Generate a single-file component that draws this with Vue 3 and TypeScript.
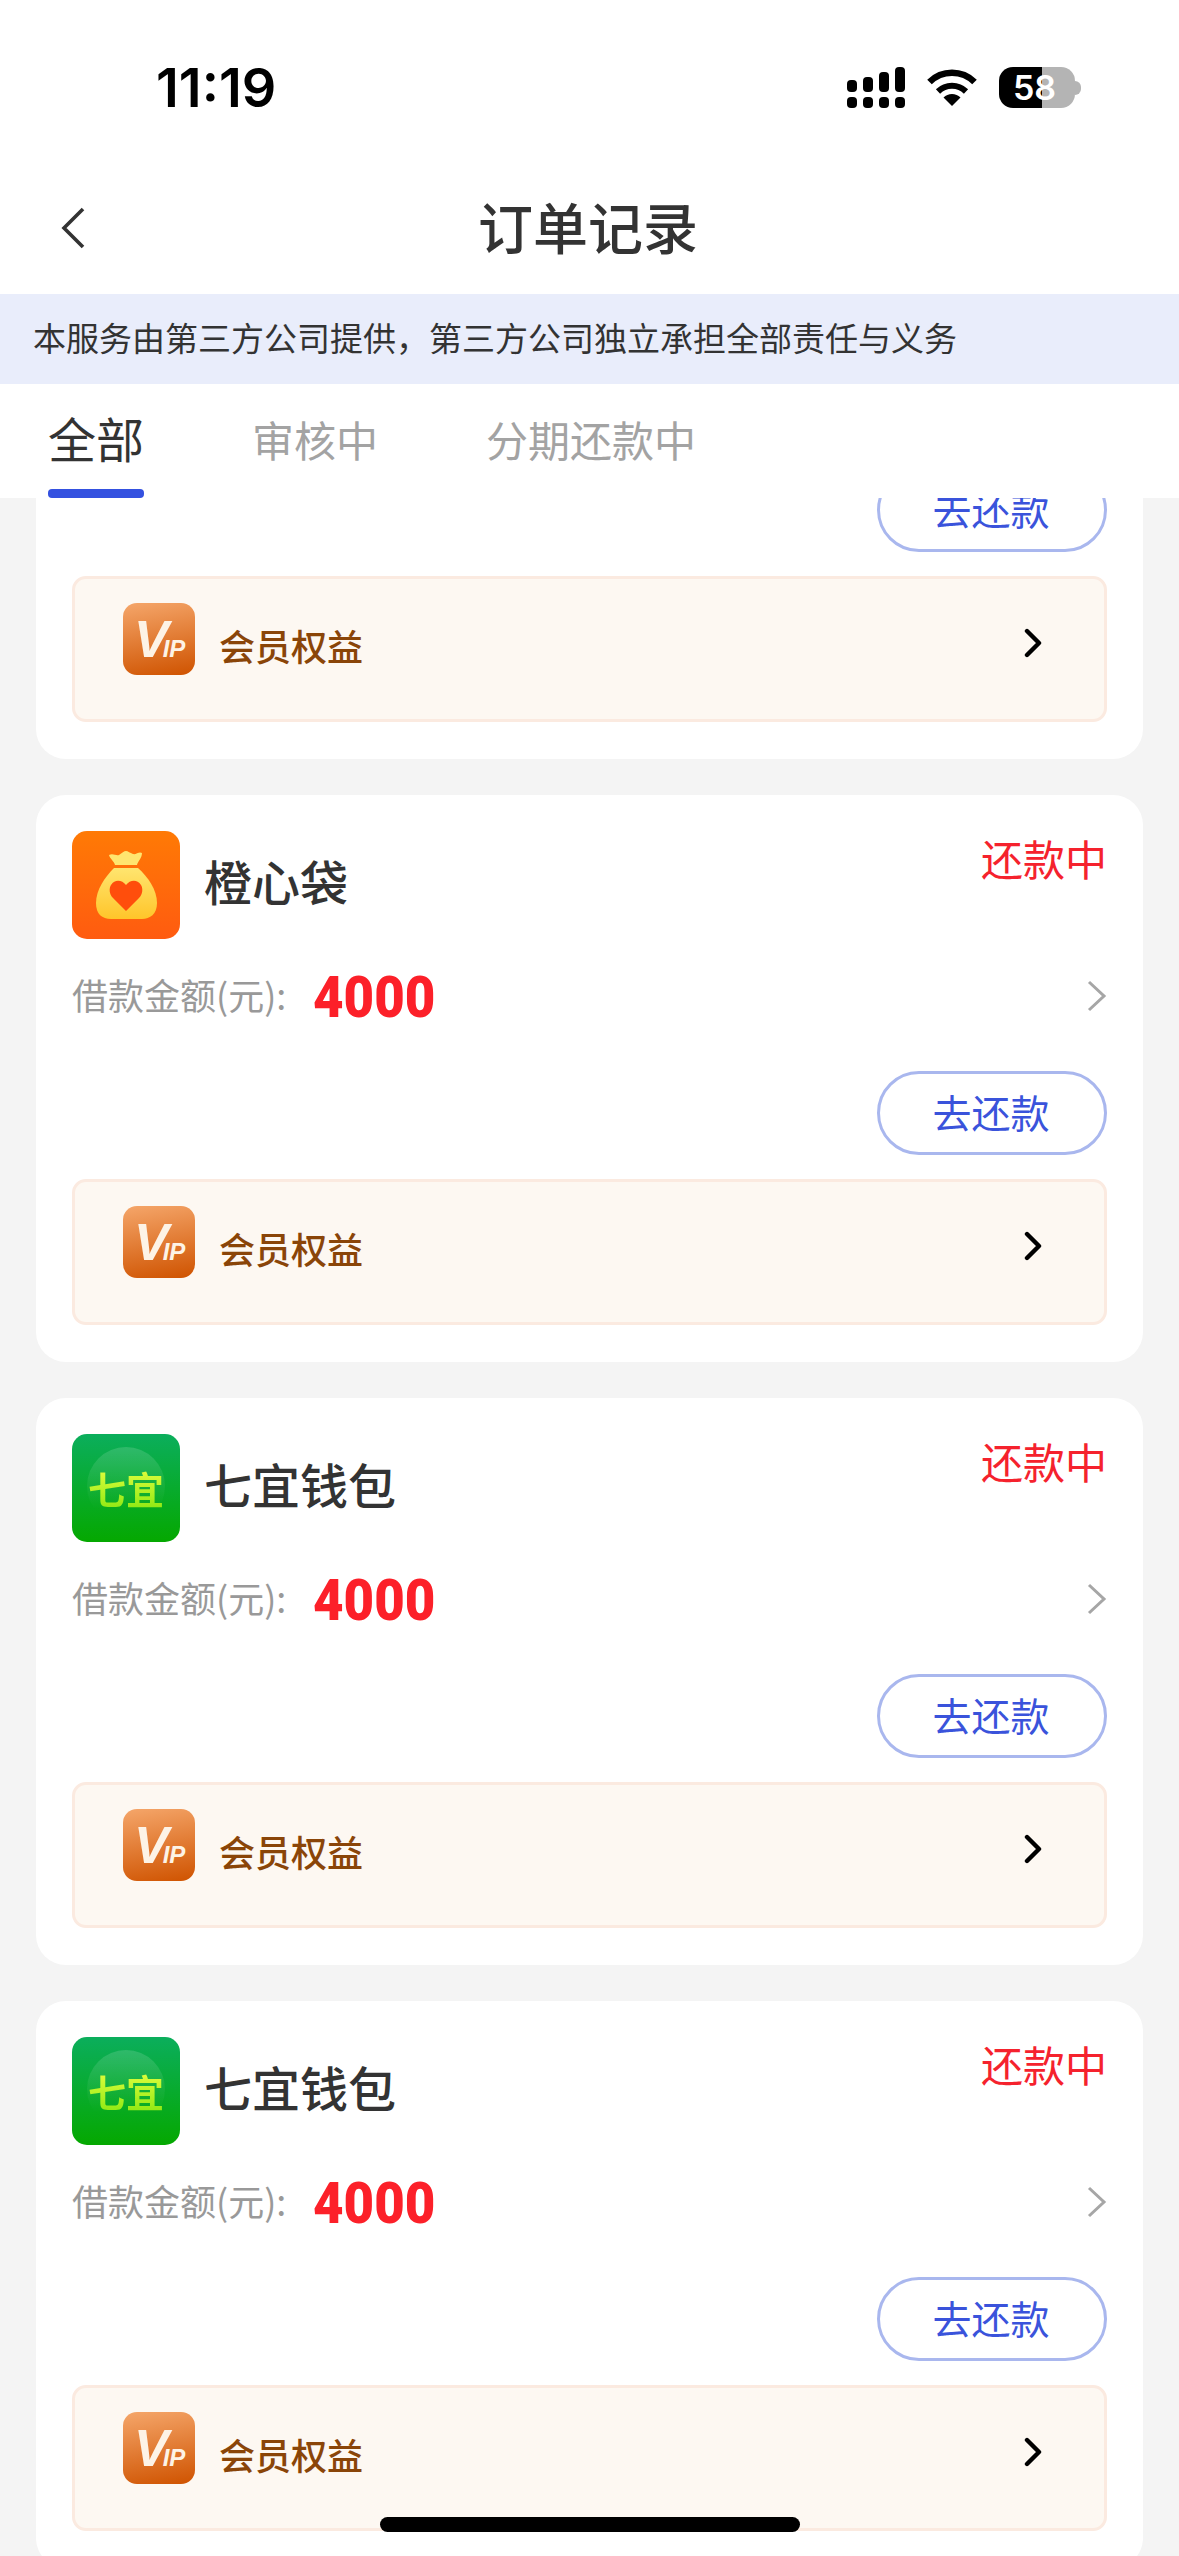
<script setup lang="ts">
import { ref } from 'vue';

type Loan = { id: number; name: string; logo: 'bag' | 'qiyi'; amount: number; partial?: boolean };

const tabs = ['全部', '审核中', '分期还款中'];
const activeTab = ref(0);

// the first order is scrolled under the tabs, only its lower part shows
const loans: Loan[] = [
  { id: 1, name: '七宜钱包', logo: 'qiyi', amount: 4000, partial: true },
  { id: 2, name: '橙心袋', logo: 'bag', amount: 4000 },
  { id: 3, name: '七宜钱包', logo: 'qiyi', amount: 4000 },
  { id: 4, name: '七宜钱包', logo: 'qiyi', amount: 4000 },
];
</script>

<template>
  <div class="page">
    <div class="status-bar">
      <span class="time">11:19</span>
      <div class="status-icons">
        <svg width="58" height="41" viewBox="0 0 58 41" fill="#000">
          <rect x="0" y="13" width="10" height="12" rx="4" />
          <rect x="16" y="10" width="10" height="15" rx="4" />
          <rect x="32" y="5" width="10" height="20" rx="4" />
          <rect x="48" y="0" width="10" height="25" rx="4" />
          <rect x="0" y="30" width="10" height="11" rx="4" />
          <rect x="16" y="30" width="10" height="11" rx="4" />
          <rect x="32" y="30" width="10" height="11" rx="4" />
          <rect x="48" y="30" width="10" height="11" rx="4" />
        </svg>
        <svg width="50" height="37" viewBox="0 0 50 37">
          <path d="M2.5 13 A32 32 0 0 1 47.5 13" fill="none" stroke="#000" stroke-width="6.5" />
          <path d="M11 22.5 A20 20 0 0 1 39 22.5" fill="none" stroke="#000" stroke-width="6" />
          <path d="M25 37 L16.5 28.5 A12 12 0 0 1 33.5 28.5 Z" fill="#000" />
        </svg>
        <div class="battery">
          <div class="battery-body">58</div>
          <div class="battery-cap"></div>
        </div>
      </div>
    </div>

    <div class="nav">
      <svg class="back" width="24" height="42" viewBox="0 0 24 42">
        <path d="M22 2 L3 21 L22 40" fill="none" stroke="#333" stroke-width="3.6" />
      </svg>
      <h1 class="title">订单记录</h1>
    </div>

    <div class="notice">本服务由第三方公司提供，第三方公司独立承担全部责任与义务</div>

    <div class="tabs">
      <div
        v-for="(tab, i) in tabs"
        :key="tab"
        class="tab"
        :class="{ active: i === activeTab }"
        @click="activeTab = i"
      >
        <span class="tab-label">{{ tab }}</span>
        <span v-if="i === activeTab" class="tab-bar"></span>
      </div>
    </div>

    <div class="list">
      <div class="list-inner">
        <div v-for="loan in loans" :key="loan.id" class="card" :class="{ partial: loan.partial }">
          <template v-if="!loan.partial">
            <div class="card-head">
              <div v-if="loan.logo === 'bag'" class="logo logo-bag">
                <svg width="108" height="108" viewBox="0 0 108 108">
                  <defs>
                    <linearGradient id="bagFill" x1="0" y1="0" x2="0" y2="1">
                      <stop offset="0" stop-color="#ffe56f" />
                      <stop offset="1" stop-color="#ffc52a" />
                    </linearGradient>
                  </defs>
                  <path
                    d="M37 24 C41 22 44 25 47 24 C50 22 52 20 54 20 C56 20 58 22 61 23 C64 24 67 20 70 22 C70 27 66 30 65 34 L43 34 C42 30 38 28 37 24 Z"
                    fill="#ffe56f"
                  />
                  <path
                    d="M42 37 L66 37 C76 46 85 59 85 72 C85 83 78 88 70 88 L39 88 C30 88 24 83 24 72 C24 59 33 46 42 37 Z"
                    fill="url(#bagFill)"
                  />
                  <path
                    d="M54 80 L41 67 C37 63 37 57 39 54 C43 48 50 49 54 54 C58 49 65 48 69 54 C71 57 71 63 67 67 Z"
                    fill="#ff4e0c"
                  />
                </svg>
              </div>
              <div v-else class="logo logo-qiyi">
                <span class="qiyi-glow"></span>
                <span class="qiyi-text">七宜</span>
              </div>
              <span class="name">{{ loan.name }}</span>
              <span class="state">还款中</span>
            </div>

            <div class="amount-row">
              <span class="amount-label">借款金额(元):</span>
              <span class="amount">{{ loan.amount }}</span>
              <svg class="row-arrow" width="20" height="32" viewBox="0 0 20 32">
                <path d="M2 2 L17 16 L2 30" fill="none" stroke="#a6a6a6" stroke-width="3" />
              </svg>
            </div>
          </template>

          <div class="action-row">
            <button class="repay">去还款</button>
          </div>

          <div class="vip">
            <div class="vip-icon">VIP</div>
            <span class="vip-text">会员权益</span>
            <svg class="vip-arrow" width="18" height="30" viewBox="0 0 18 30">
              <path d="M3 3 L15 15 L3 27" fill="none" stroke="#000" stroke-width="4.4" stroke-linecap="round" stroke-linejoin="round" />
            </svg>
          </div>
        </div>
      </div>
    </div>

    <div class="home-indicator"></div>
  </div>
</template>

<style scoped>
.page {
  position: relative;
  display: flex;
  flex-direction: column;
  width: 1179px;
  height: 2556px;
  overflow: hidden;
  background: #f4f4f4;
  font-family: 'Noto Sans CJK SC', 'Noto Sans', sans-serif;
  color: #333;
}

.status-bar {
  display: flex;
  justify-content: space-between;
  flex-shrink: 0;
  height: 162px;
  padding: 0 98px 0 156px;
  background: #fff;
}

.time {
  margin-top: 58px;
  font-family: Inter, sans-serif;
  font-size: 54px;
  line-height: 60px;
  font-weight: 600;
  color: #000;
}

.status-icons {
  display: flex;
  align-items: flex-start;
  gap: 22px;
  padding-top: 67px;
}

.status-icons svg:nth-child(2) {
  margin-top: 2px;
}

.battery {
  display: flex;
  align-items: center;
}

.battery-body {
  box-sizing: border-box;
  width: 76px;
  height: 41px;
  padding-right: 5px;
  border-radius: 14px;
  background: linear-gradient(90deg, #000 0, #000 43px, #b4b4b4 43px);
  font-family: Inter, sans-serif;
  font-size: 34px;
  line-height: 41px;
  font-weight: 600;
  text-align: center;
  color: #fff;
}

.battery-cap {
  width: 6px;
  height: 14px;
  border-radius: 0 7px 7px 0;
  background: #b4b4b4;
}

.nav {
  position: relative;
  display: flex;
  justify-content: center;
  align-items: center;
  flex-shrink: 0;
  height: 132px;
  padding-bottom: 7px;
  box-sizing: border-box;
  background: #fff;
}

.back {
  position: absolute;
  left: 61px;
  top: 45px;
}

.title {
  margin: 0 3px 0 0;
  font-size: 55px;
  line-height: 72px;
  font-weight: 500;
  color: #333;
}

.notice {
  flex-shrink: 0;
  height: 90px;
  padding-left: 33px;
  background: #e9edfb;
  font-size: 33px;
  line-height: 87px;
  color: #333;
}

.tabs {
  display: flex;
  gap: 108px;
  flex-shrink: 0;
  height: 114px;
  padding: 0 48px;
  background: #fff;
}

.tab {
  display: flex;
  flex-direction: column;
  align-items: center;
  height: 114px;
  padding-top: 25px;
  box-sizing: border-box;
  color: #a3a3a3;
  font-size: 42px;
}

.tab-label {
  line-height: 60px;
}

.tab.active {
  padding-top: 23px;
  color: #333;
  font-size: 48px;
}

.tab-bar {
  width: 96px;
  height: 9px;
  margin-top: auto;
  border-radius: 4px;
  background: #3451e0;
}

.list {
  flex: 1;
  min-height: 0;
  overflow: hidden;
  padding: 0 36px;
}

.list-inner {
  display: flex;
  flex-direction: column;
  gap: 36px;
  margin-top: -30px;
}

.card {
  flex-shrink: 0;
  box-sizing: border-box;
  height: 567px;
  padding: 36px;
  border-radius: 30px;
  background: #fff;
}

.card.partial {
  height: auto;
  padding: 0 36px 37px;
  border-radius: 0 0 30px 30px;
}

.partial .action-row {
  margin-top: 0;
}

.card-head {
  display: flex;
  align-items: center;
  height: 108px;
}

.logo {
  position: relative;
  flex-shrink: 0;
  width: 108px;
  height: 108px;
  border-radius: 15px;
  overflow: hidden;
}

.logo-bag {
  background: linear-gradient(180deg, #ff7a05, #ff5b10);
}

.logo-bag svg {
  display: block;
}

.logo-qiyi {
  display: flex;
  align-items: center;
  justify-content: center;
  background: linear-gradient(180deg, #0bae5c, #05a800);
}

.qiyi-glow {
  position: absolute;
  left: 15px;
  top: 13px;
  width: 78px;
  height: 78px;
  border-radius: 50%;
  background: linear-gradient(180deg, rgba(255, 255, 255, 0.15), rgba(255, 255, 255, 0) 80%);
}

.qiyi-text {
  position: relative;
  font-size: 38px;
  line-height: 44px;
  font-weight: 700;
  background: linear-gradient(180deg, #e6ff40, #8de812);
  -webkit-background-clip: text;
  background-clip: text;
  color: transparent;
}

.name {
  margin-left: 24px;
  margin-top: -10px;
  font-size: 48px;
  line-height: 64px;
  font-weight: 500;
  color: #333;
}

.state {
  align-self: flex-start;
  margin-left: auto;
  margin-top: -2px;
  font-size: 42px;
  line-height: 58px;
  color: #f5222d;
}

.amount-row {
  display: flex;
  align-items: center;
  height: 56px;
  margin-top: 28px;
}

.amount-label {
  margin-top: -2px;
  font-size: 36px;
  color: #999;
}

.amount {
  margin-left: 27px;
  margin-top: 3px;
  font-family: Roboto, sans-serif;
  font-size: 58px;
  line-height: 56px;
  font-weight: 900;
  color: #fc2029;
  transform: scaleX(0.91);
  transform-origin: left center;
}

.row-arrow {
  margin-left: auto;
  margin-top: 2px;
}

.action-row {
  display: flex;
  justify-content: flex-end;
  margin-top: 48px;
}

.repay {
  box-sizing: border-box;
  width: 230px;
  height: 84px;
  padding: 0 2px 5px 0;
  border: 3px solid #a9b7ee;
  border-radius: 42px;
  background: #fff;
  font-family: inherit;
  font-size: 39px;
  color: #3a53db;
}

.vip {
  display: flex;
  align-items: flex-start;
  box-sizing: border-box;
  height: 146px;
  margin-top: 24px;
  padding: 24px 62px 0 48px;
  border: 3px solid #fbeae0;
  border-radius: 14px;
  background: #fdf8f2;
}

.vip-icon {
  display: block;
  flex-shrink: 0;
  box-sizing: border-box;
  width: 72px;
  height: 72px;
  padding-left: 11px;
  border-radius: 14px;
  background: linear-gradient(170deg, #f5a66a, #cf5300);
  font-family: 'Liberation Sans', sans-serif;
  font-size: 24px;
  font-style: italic;
  font-weight: 700;
  line-height: 72px;
  color: #fdf3e6;
  overflow: hidden;
}

.vip-icon::first-letter {
  font-size: 52px;
  margin-right: -6px;
}

.vip-text {
  margin-left: 24px;
  margin-top: 17px;
  font-size: 36px;
  line-height: 50px;
  font-weight: 500;
  color: #8a4508;
}

.vip-arrow {
  margin-left: auto;
  margin-top: 25px;
}

.home-indicator {
  position: absolute;
  left: 380px;
  top: 2517px;
  width: 420px;
  height: 15px;
  border-radius: 8px;
  background: #000;
}
</style>

<style>
html,
body {
  margin: 0;
  background: #f4f4f4;
}
</style>
